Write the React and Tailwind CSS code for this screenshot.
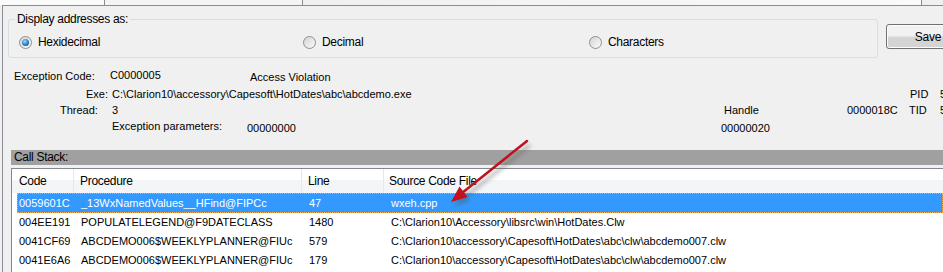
import React from "react";

const stack = [
	{ code: "0059601C", proc: "_13WxNamedValues__HFind@FIPCc", line: "47", file: "wxeh.cpp", selected: true },
	{ code: "004EE191", proc: "POPULATELEGEND@F9DATECLASS", line: "1480", file: "C:\\Clarion10\\Accessory\\libsrc\\win\\HotDates.Clw" },
	{ code: "0041CF69", proc: "ABCDEMO006$WEEKLYPLANNER@FIUc", line: "579", file: "C:\\Clarion10\\accessory\\Capesoft\\HotDates\\abc\\clw\\abcdemo007.clw" },
	{ code: "0041E6A6", proc: "ABCDEMO006$WEEKLYPLANNER@FIUc", line: "179", file: "C:\\Clarion10\\accessory\\Capesoft\\HotDates\\abc\\clw\\abcdemo007.clw" },
];

function Radio({ checked, label, className }) {
	return (
		<div className={`flex items-center gap-[6px] ${className || ""}`}>
			<div className="w-[13px] h-[13px] rounded-full border border-[#8e8f8f] bg-linear-to-br from-[#d4d4d4] to-[#fbfbfb] flex items-center justify-center shrink-0">
				{checked && (
					<div className="w-[7px] h-[7px] rounded-full bg-[radial-gradient(circle_at_40%_35%,#9fdcff,#1c74bd_60%,#0d4a84)]" />
				)}
			</div>
			<span className="text-[12px] tracking-[-0.3px] leading-[15px] text-black">{label}</span>
		</div>
	);
}

export default function App() {
	return (
		<div className="relative w-[943px] h-[272px] overflow-hidden bg-[#f0f0f0] font-['Liberation_Sans',Arial,sans-serif] text-black">
			{/* tab strip remnants */}
			<div className="flex h-[5px]">
				<div className="w-[105px] bg-[#fbfbfb] border-r border-[#898c95]" />
				<div className="w-[198px] bg-[#f4f4f4] border-r border-[#898c95]" />
				<div className="w-[619px] bg-linear-to-r from-[#f0f0f0] to-[#fafafa] border-r border-[#898c95]" />
				<div className="flex-1 bg-[#f0f0f0]" />
			</div>

			<div className="ml-[2px] border-l border-t border-[#898c95] h-[267px]">
				{/* display options + save */}
				<div className="flex items-start">
					<fieldset className="ml-[5px] mt-[6px] w-[870px] shrink-0 border border-[#d5dfe5] rounded-[3px] pb-[6px]">
						<legend className="ml-[6px] px-[2px] text-[12px] tracking-[-0.3px] leading-[15px]">Display addresses as:</legend>
						<div className="flex items-center h-[18px] mt-[6px] pl-[10px]">
							<Radio checked label="Hexidecimal" className="w-[284px]" />
							<Radio label="Decimal" className="w-[286px]" />
							<Radio label="Characters" />
						</div>
					</fieldset>
					<button className="ml-[8px] mt-[18px] w-[84px] h-[25px] shrink-0 rounded-[3px] border border-[#707070] bg-linear-to-b from-[#f2f2f2] from-45% to-[#d4d4d4] to-55% text-[12px] tracking-[-0.2px] shadow-[inset_0_0_0_1px_#fcfcfc]">
						Save
					</button>
				</div>

				{/* exception details */}
				<div className="mt-[10px] text-[11px] leading-[16px] whitespace-nowrap">
					<div className="flex h-[16px] pl-[11px]">
						<div className="w-[96px] shrink-0">Exception Code:</div>
						<div className="w-[140px] shrink-0 -mt-[1px]">C0000005</div>
						<div className="mt-[1px]">Access Violation</div>
					</div>
					<div className="flex h-[16px] mt-[2px] pl-[79px]">
						<div className="w-[30px] shrink-0 text-right pr-[4px]">Exe:</div>
						<div className="w-[798px] shrink-0">C:\Clarion10\accessory\Capesoft\HotDates\abc\abcdemo.exe</div>
						<div className="w-[30px] shrink-0">PID</div>
						<div>5</div>
					</div>
					<div className="flex h-[16px] pl-[57px]">
						<div className="w-[52px] shrink-0">Thread:</div>
						<div className="w-[612px] shrink-0">3</div>
						<div className="w-[123px] shrink-0">Handle</div>
						<div className="w-[62px] shrink-0">0000018C</div>
						<div className="w-[31px] shrink-0">TID</div>
						<div>5</div>
					</div>
					<div className="flex h-[16px] pl-[109px]">
						<div className="w-[135px] shrink-0">Exception parameters:</div>
						<div className="w-[474px] shrink-0 pt-[2px]">00000000</div>
						<div className="pt-[2px]">00000020</div>
					</div>
				</div>

				{/* call stack */}
				<div className="mt-[16px] ml-[8px] h-[15px] bg-[#a0a0a0] pl-[3px] text-[12px] tracking-[-0.3px] leading-[15px]">
					Call Stack:
				</div>
				<div className="mt-[3px] ml-[8px] border-l border-t border-[#828790] bg-white h-[110px]">
					<div className="flex h-[24px] items-center bg-linear-to-b from-white from-45% to-[#f4f5f7] to-45% text-[12px] tracking-[-0.3px] whitespace-nowrap">
						<div className="w-[62px] shrink-0 pl-[7px] h-full flex items-center border-r border-[#e8e8e8]">Code</div>
						<div className="w-[228px] shrink-0 pl-[6px] h-full flex items-center border-r border-[#e8e8e8]">Procedure</div>
						<div className="w-[82px] shrink-0 pl-[6px] h-full flex items-center border-r border-[#e8e8e8]">Line</div>
						<div className="pl-[5px] h-full flex items-center">Source Code File</div>
					</div>
					<div className="pl-[5px] text-[11px] whitespace-nowrap">
						{stack.map((r, i) => (
							<div
								key={i}
								className={`flex items-center border ${
									r.selected
										? "h-[20px] bg-[#3399ff] text-white border-dotted border-[#f0a94a]"
										: "h-[19px] border-transparent"
								}`}
							>
								<div className="w-[56px] shrink-0 pl-[1px]">{r.code}</div>
								<div className="w-[228px] shrink-0 pl-[7px]">{r.proc}</div>
								<div className="w-[82px] shrink-0 pl-[7px]">{r.line}</div>
								<div className="pl-[7px]">{r.file}</div>
							</div>
						))}
					</div>
				</div>
			</div>

			{/* annotation arrow */}
			<svg className="absolute left-0 top-0 pointer-events-none" width="943" height="272" viewBox="0 0 943 272">
				<defs>
					<filter id="arrowShadow" x="-20%" y="-20%" width="140%" height="140%">
						<feGaussianBlur stdDeviation="2" />
					</filter>
				</defs>
				<g transform="translate(3 4)" opacity="0.45" filter="url(#arrowShadow)">
					<line x1="527" y1="141" x2="462" y2="193" stroke="#555" strokeWidth="3" />
					<polygon points="451,202 467,197 459,187" fill="#555" />
				</g>
				<line x1="527" y1="141" x2="462" y2="193" stroke="#c0111c" strokeWidth="2.5" strokeLinecap="round" />
				<polygon points="451,202 467.5,197 459.5,186.5" fill="#c0111c" />
			</svg>
		</div>
	);
}
